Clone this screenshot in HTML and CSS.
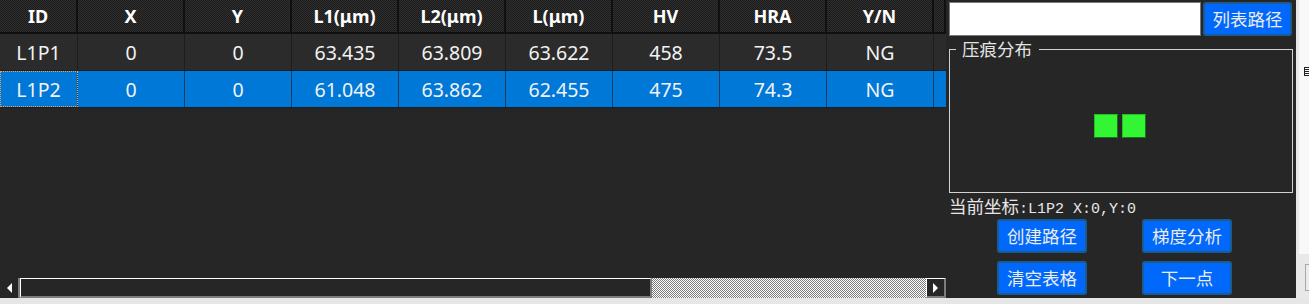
FILE: index.html
```html
<!DOCTYPE html>
<html lang="zh-CN">
<head>
<meta charset="utf-8">
<title>压痕测量</title>
<link rel="stylesheet" href="styles.css">
</head>
<body>
<div class="app">
  <section class="grid-area">
    <div class="table">
      <div class="row head">
        <div class="th">ID</div><div class="th">X</div><div class="th">Y</div>
        <div class="th">L1(μm)</div><div class="th">L2(μm)</div><div class="th">L(μm)</div>
        <div class="th">HV</div><div class="th">HRA</div><div class="th">Y/N</div><div class="th filler"></div>
      </div>
      <div class="row body">
        <div class="td">L1P1</div><div class="td">0</div><div class="td">0</div>
        <div class="td">63.435</div><div class="td">63.809</div><div class="td">63.622</div>
        <div class="td">458</div><div class="td">73.5</div><div class="td">NG</div><div class="td filler"></div>
      </div>
      <div class="row body selected">
        <div class="td focus">L1P2</div><div class="td">0</div><div class="td">0</div>
        <div class="td">61.048</div><div class="td">63.862</div><div class="td">62.455</div>
        <div class="td">475</div><div class="td">74.3</div><div class="td">NG</div><div class="td filler"></div>
      </div>
    </div>
    <div class="spacer"></div>
    <div class="hscroll">
      <div class="sb-btn sb-left"><span class="tri-left"></span></div>
      <div class="sb-thumb"></div>
      <div class="sb-track"></div>
      <div class="sb-btn sb-right"><span class="tri-right"></span></div>
    </div>
  </section>
  <aside class="panel">
    <div class="path-row">
      <input class="path-input" type="text" value="">
      <button class="btn btn-list">列表路径</button>
    </div>
    <fieldset class="group">
      <legend class="legend">压痕分布</legend>
      <div class="canvas">
        <span class="pt" style="left:144px;top:56px"></span>
        <span class="pt" style="left:172px;top:56px"></span>
      </div>
    </fieldset>
    <div class="status">当前坐标<span class="mono">:L1P2 X:0,Y:0</span></div>
    <div class="actions">
      <button class="btn">创建路径</button>
      <button class="btn">梯度分析</button>
      <button class="btn">清空表格</button>
      <button class="btn">下一点</button>
    </div>
  </aside>
</div>
<div class="side">
  <div class="side-top"><span class="side-mark"></span></div>
  <div class="side-bottom"><span class="side-box"></span></div>
</div>
</body>
</html>
```
FILE: styles.css
```css
* { box-sizing: border-box; }
html, body { margin: 0; padding: 0; }
body {
  width: 1309px;
  height: 304px;
  background: #e6e6e6;
  display: flex;
  align-items: flex-start;
  overflow: hidden;
  font-family: "Noto Sans", "Noto Sans CJK SC", sans-serif;
}
.app {
  width: 1296px;
  height: 298px;
  background: #262626;
  display: flex;
}
.grid-area {
  width: 946px;
  display: flex;
  flex-direction: column;
}
.table { display: flex; flex-direction: column; }
.row {
  display: grid;
  grid-template-columns: 78px repeat(8, 107px) 12px;
}
.head { height: 34px; border-bottom: 2px solid #0f0f0f; }
.th {
  background-color: #232323;
  background-image: repeating-conic-gradient(#303030 0 25%, #1a1a1a 0 50%);
  background-size: 2px 2px;
  border-right: 2px solid #101010;
  color: #ffffff;
  font-weight: 700;
  font-size: 18px;
  display: flex;
  align-items: center;
  justify-content: center;
  padding-bottom: 1px;
}
.body { height: 37px; border-bottom: 1px solid #1f1f1f; background: #2b2b2b; }
.td {
  border-right: 1px solid #1d1d1d;
  color: #f2f2f2;
  font-size: 19.5px;
  display: flex;
  align-items: center;
  justify-content: center;
}
.selected { background: #0078d7; }
.selected .td { border-right-color: #1a3a5a; }
.focus { outline: 1px dotted #f0a050; outline-offset: -1px; }
.td.filler { border-right: none; }
.spacer { flex: 1; }

.hscroll { height: 20px; display: flex; }
.sb-btn {
  width: 20px;
  display: flex;
  align-items: center;
  justify-content: center;
  background: #262626;
}
.sb-left { border-right: 2px solid #7c7c7c; }
.sb-right {
  width: 20px;
  border-top: 1px solid #ffffff;
  border-left: 1px solid #ffffff;
  border-right: 2px solid #7c7c7c;
  border-bottom: 2px solid #7c7c7c;
}
.tri-left {
  width: 0; height: 0;
  border-top: 5px solid transparent;
  border-bottom: 5px solid transparent;
  border-right: 5px solid #ffffff;
}
.tri-right {
  width: 0; height: 0;
  border-top: 5px solid transparent;
  border-bottom: 5px solid transparent;
  border-left: 5px solid #ffffff;
}
.sb-thumb {
  width: 632px;
  background: #262626;
  border-top: 1px solid #ffffff;
  border-left: 1px solid #ffffff;
  border-right: 2px solid #7c7c7c;
  border-bottom: 2px solid #7c7c7c;
}
.sb-track {
  flex: 1;
  background-image: repeating-conic-gradient(#ffffff 0 25%, #7a7a7a 0 50%);
  background-size: 2px 2px;
}

.panel {
  width: 350px;
  padding: 2px 4px 0 3px;
  display: flex;
  flex-direction: column;
  font-family: "Noto Sans CJK SC", sans-serif;
  color: #e8e8e8;
}
.path-row { display: flex; gap: 2px; height: 34px; }
.path-input {
  width: 252px;
  height: 34px;
  margin: 0;
  border: 1px solid #7a7a7a;
  background: #ffffff;
  outline: none;
}
.btn {
  width: 90px;
  height: 34px;
  margin: 0;
  padding: 0;
  background: #0068fa;
  border: 2px solid #1a5c92;
  border-radius: 3px;
  color: #ececec;
  font-family: "Noto Sans CJK SC", sans-serif;
  font-size: 17.5px;
  line-height: 30px;
}
.btn-list { width: 89px; }
.group {
  margin: 4px 0 0 0;
  padding: 0;
  width: 344px;
  height: 153px;
  border: 1px solid #d2d2d2;
  min-width: 0;
}
.legend {
  margin-left: 6px;
  padding: 0 7px 0 6px;
  font-size: 17.5px;
  line-height: 18px;
  color: #e4e4e4;
}
.canvas { position: relative; width: 100%; height: 100%; }
.pt {
  position: absolute;
  width: 24px;
  height: 24px;
  background: #33f533;
  border: 1px solid #22c022;
  border-right-color: #157815;
  border-bottom-color: #157815;
}
.status {
  height: 26px;
  line-height: 24px;
  font-size: 17.5px;
  color: #e6e6e6;
  padding-top: 1px;
  white-space: nowrap;
}
.mono { font-family: "Liberation Mono", monospace; font-size: 15px; }
.actions {
  display: grid;
  grid-template-columns: 90px 90px;
  column-gap: 55px;
  row-gap: 8px;
  padding-left: 48px;
}

.side {
  width: 13px;
  height: 298px;
  display: flex;
  flex-direction: column;
  background: #e8e8e8;
  padding-left: 3px;
}
.side-top {
  height: 254px;
  background: #f8f8f8;
  position: relative;
}
.side-mark {
  position: absolute;
  left: 5px;
  top: 67px;
  width: 5px;
  height: 9px;
  background-image: repeating-linear-gradient(#222 0 1px, transparent 1px 2px);
  border-left: 1px solid #222;
}
.side-bottom { flex: 1; position: relative; }
.side-box {
  position: absolute;
  left: 6px;
  top: 10px;
  width: 6px;
  height: 27px;
  border: 1px solid #a8a8a8;
  background: #ececec;
}
```
